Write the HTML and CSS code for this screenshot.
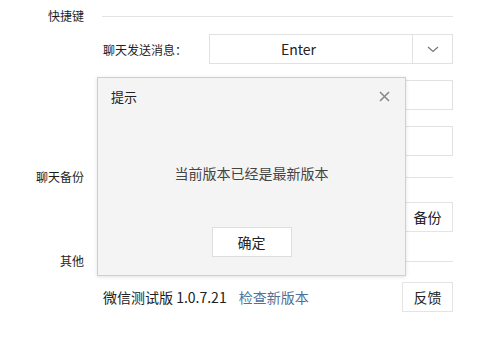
FILE: index.html
```html
<!DOCTYPE html>
<html lang="zh-CN">
<head>
    <meta charset="UTF-8">
    <meta name="viewport" content="width=device-width, initial-scale=1.0">
    <title>设置</title>
    <link rel="stylesheet" href="styles.css">
</head>
<body>
    <div class="settings">
        <div class="section-head head-first">
            <span class="section-title">快捷键</span>
            <span class="section-line"></span>
        </div>
        <div class="row row-first">
            <span class="row-label">聊天发送消息：</span>
            <div class="select">
                <span class="select-value">Enter</span>
                <span class="select-arrow">
                    <svg width="12" height="7" viewBox="0 0 12 7"><polyline points="1,1 6,5.5 11,1" fill="none" stroke="#777" stroke-width="1.2"/></svg>
                </span>
            </div>
        </div>
        <!-- 下面两行的标签被弹窗挡住 -->
        <div class="row row-next">
            <span class="row-label"></span>
            <div class="input"></div>
        </div>
        <div class="row row-next">
            <span class="row-label"></span>
            <div class="input"></div>
        </div>

        <div class="section-head head-backup">
            <span class="section-title">聊天备份</span>
            <span class="section-line"></span>
        </div>
        <div class="row row-backup">
            <span class="row-text"></span>
            <button class="btn">备份</button>
        </div>

        <div class="section-head head-other">
            <span class="section-title">其他</span>
            <span class="section-line"></span>
        </div>
        <div class="row row-other">
            <span class="row-text">微信测试版 1.0.7.21<a class="link" href="#">检查新版本</a></span>
            <button class="btn">反馈</button>
        </div>
    </div>

    <div class="dialog">
        <div class="dialog-head">
            <span class="dialog-title">提示</span>
            <span class="dialog-close">
                <svg width="11" height="11" viewBox="0 0 11 11"><path d="M1 1L10 10M10 1L1 10" stroke="#8a8a8a" stroke-width="1.6"/></svg>
            </span>
        </div>
        <div class="dialog-msg">当前版本已经是最新版本</div>
        <div class="dialog-foot">
            <button class="btn dialog-ok">确定</button>
        </div>
    </div>
</body>
</html>
```

FILE: styles.css
```css
body {
    margin: 0;
    background-color: #fff;
    font-family: "Noto Sans CJK SC", "Noto Sans", sans-serif;
    color: #222;
    width: 498px;
    height: 348px;
    overflow: hidden;
    position: relative;
}
.settings {
    width: 453px;
    display: flex;
    flex-direction: column;
}
.section-head {
    display: flex;
    align-items: center;
    height: 20px;
}
.section-title {
    width: 84px;
    text-align: right;
    font-size: 12px;
    line-height: 20px;
    color: #1e1e1e;
}
.section-line {
    flex: 1;
    height: 1px;
    margin-left: 18px;
    background-color: #e3e3e3;
}
.head-first { margin-top: 6px; }
.head-backup { margin-top: 11px; }
.head-other { margin-top: 19px; }

.row {
    display: flex;
    align-items: center;
    height: 30px;
    margin-left: 102px;
}
.row-first { margin-top: 8px; }
.row-next { margin-top: 16px; }
.row-backup { margin-top: 15px; }
.row-other { margin-top: 11px; }

.row-label {
    width: 106px;
    font-size: 12px;
    padding-left: 1px;
    color: #222;
}
.row-text {
    flex: 1;
    font-size: 14px;
    padding-left: 1px;
    color: #222;
}
.select,
.input {
    flex: 1;
    height: 28px;
    display: flex;
    border: 1px solid #e2e2e2;
    background-color: #fff;
}
.select-value {
    flex: 1;
    font-size: 14px;
    line-height: 28px;
    padding-left: 71px;
}
.select-arrow {
    width: 39px;
    border-left: 1px solid #e2e2e2;
    display: flex;
    align-items: center;
    justify-content: center;
}
.link {
    margin-left: 12px;
    color: #50719a;
    text-decoration: none;
}
.btn {
    width: 51px;
    height: 30px;
    padding: 0;
    border: 1px solid #e4e4e4;
    background-color: #fff;
    font-family: inherit;
    font-size: 14px;
    color: #222;
}

.dialog {
    position: absolute;
    left: 97px;
    top: 77px;
    width: 307px;
    height: 197px;
    background-color: #f4f4f4;
    border: 1px solid #cfcfcf;
    box-shadow: 0 1px 4px rgba(0, 0, 0, 0.12);
    display: flex;
    flex-direction: column;
}
.dialog-head {
    height: 37px;
    display: flex;
    align-items: center;
    justify-content: space-between;
    padding: 0 15px 0 13px;
}
.dialog-title {
    font-size: 13px;
    color: #222;
}
.dialog-close {
    display: flex;
}
.dialog-msg {
    margin-top: 48px;
    text-align: center;
    font-size: 14px;
    line-height: 20px;
    color: #444;
}
.dialog-foot {
    margin-top: 44px;
    display: flex;
    justify-content: center;
}
.dialog-ok {
    width: 80px;
    border-color: #dedede;
}
```
